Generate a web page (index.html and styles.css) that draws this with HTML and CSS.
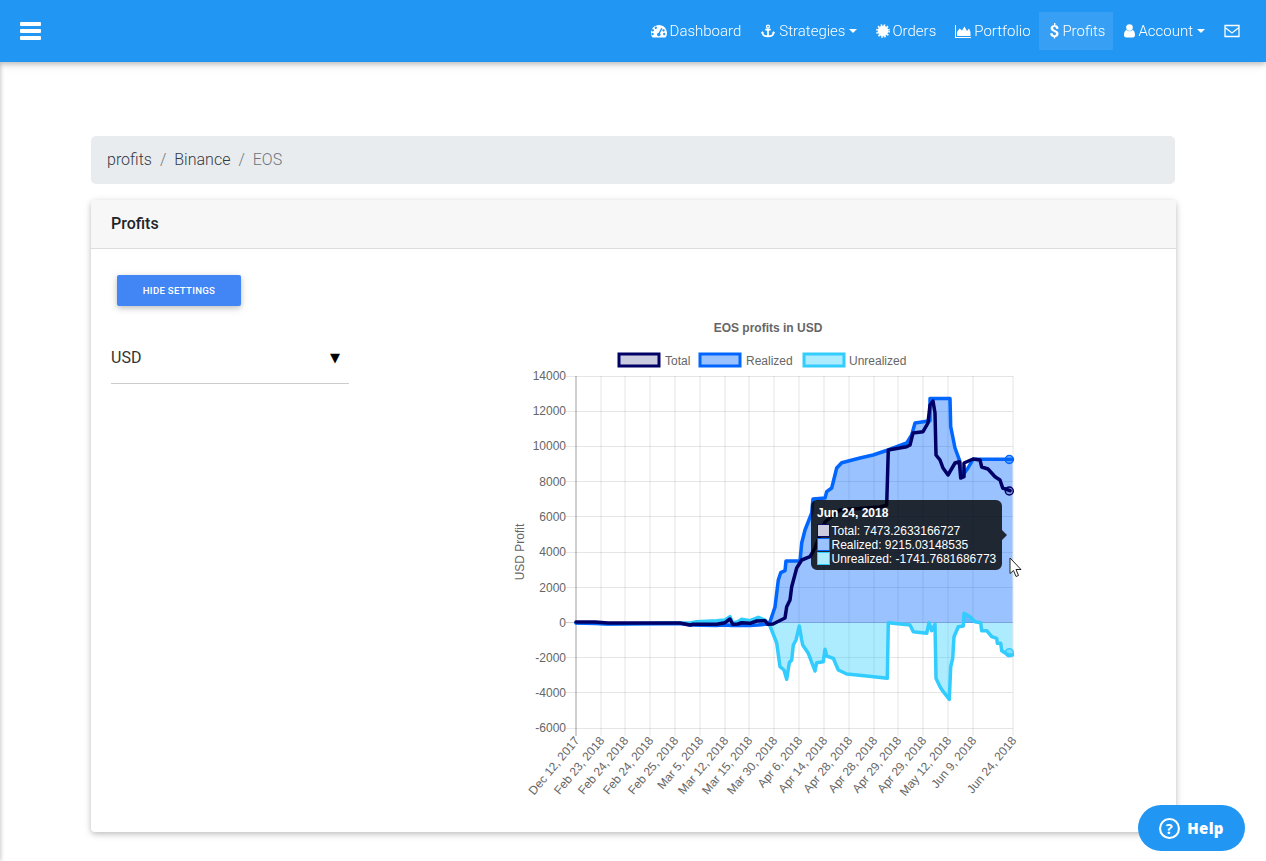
FILE: index.html
```html
<!DOCTYPE html>
<html lang="en">
<head>
<meta charset="utf-8">
<title>Profits</title>
<link rel="stylesheet" href="styles.css">
</head>
<body>
<div class="edge-shadow"></div>
<header class="navbar">
  <button class="burger" aria-label="Menu"><span></span><span></span><span></span></button>
  <nav class="nav">
    <a class="link"><svg class="ic w16" viewBox="0 0 16 14"><path fill-rule="evenodd" d="M8 1C3.6 1 0 4.6 0 9c0 1.500.4 2.900 1.100 4.100.2.300.4.400.7.400h12.400c.3 0 .5-.1.700-.4C15.600 11.900 16 10.500 16 9c0-4.400-3.600-8-8-8zM3 6.200a1.200 1.200 0 1 0 0 .01zM2.800 10a1.200 1.200 0 1 0 0 .01zM6 3.700a1.200 1.200 0 1 0 0 .01zM11.400 4.400 9 9.300a1.700 1.700 0 1 1-1.300-.5l2.500-4.900zM13.700 6.400a1.200 1.200 0 1 0 0 .01zM14.400 10a1.200 1.200 0 1 0 0 .01z"/></svg>Dashboard</a>
    <a class="link"><svg class="ic w16" viewBox="0 0 16 16"><path fill="none" stroke="#fff" stroke-width="2" d="M8 5v9M4.800 6.500h6.400M1.500 9c0 3.500 3 5 6.500 5s6.500-1.500 6.500-5"/><circle cx="8" cy="3" r="1.700" fill="none" stroke="#fff" stroke-width="1.500"/><path d="M0 10.500 1.500 8 3.500 10.500zM16 10.500 14.500 8 12.500 10.500z"/></svg>Strategies<i class="caret"></i></a>
    <a class="link"><svg class="ic w14" viewBox="0 0 14 14"><circle cx="7" cy="7" r="5.400"/><circle cx="7" cy="7" r="6.100" fill="none" stroke="#fff" stroke-width="1.600" stroke-dasharray="1.600 1.600"/></svg>Orders</a>
    <a class="link"><svg class="ic w16" viewBox="0 0 16 14"><path d="M0 1h1v12h15v1H0z"/><path d="M2 12V8l2.500-3.500L7 6.500 9.500 2.500 12 7l2-2.500L15.500 8v4z"/></svg>Portfolio</a>
    <a class="link active"><span class="dollar">$</span>Profits</a>
    <a class="link"><svg class="ic w11" viewBox="0 0 11 14"><circle cx="5.500" cy="3.600" r="3.300"/><path d="M0 11c0-3 1-4.800 2.700-5 .7.800 1.700 1.200 2.800 1.200S7.600 6.800 8.300 6c1.700.2 2.700 2 2.700 5 0 1.700-1 2.500-2.300 2.500H2.300C1 13.500 0 12.700 0 11z"/></svg>Account<i class="caret"></i></a>
    <a class="link"><svg class="ic w16" viewBox="0 0 16 14"><path fill="none" stroke="#fff" stroke-width="1.300" d="M1 1.500h14v11H1zM1 3.500l7 5.500 7-5.500"/></svg></a>
  </nav>
</header>

<main class="page">
  <ol class="crumbs">
    <li>profits</li>
    <li class="sep">/</li>
    <li class="crumb-mid">Binance</li>
    <li class="sep">/</li>
    <li class="crumb-last">EOS</li>
  </ol>

  <section class="card">
    <h2 class="card-head">Profits</h2>
    <div class="card-body">
      <div class="settings">
        <button class="btn">Hide settings</button>
        <div class="select"><span>USD</span><span class="arrow">▼</span></div>
      </div>
      <svg class="chart" viewBox="505 315 525 490" width="525" height="490">
        <text class="title" x="768" y="332" text-anchor="middle">EOS profits in USD</text>

        <rect x="619" y="354" width="40" height="12" class="sw-total"/>
        <text class="tick" x="665" y="365">Total</text>
        <rect x="700" y="354" width="40" height="12" class="sw-real"/>
        <text class="tick" x="746" y="365">Realized</text>
        <rect x="804" y="354" width="40" height="12" class="sw-unreal"/>
        <text class="tick" x="849" y="365">Unrealized</text>

        <path class="grid" d="M566 376.500H1013M566 411.500H1013M566 446.500H1013M566 481.500H1013M566 516.500H1013M566 552.500H1013M566 587.500H1013M566 657.500H1013M566 692.500H1013M566 728.500H1013M601 376V736M625 376V736M650 376V736M675 376V736M700 376V736M725 376V736M749 376V736M774 376V736M799 376V736M824 376V736M849 376V736M874 376V736M898 376V736M923 376V736M948 376V736M973 376V736M1013 376V736"/>
        <path class="zero" d="M566 622.500H1013"/>
        <path class="axis" d="M576 376V736"/>

        <g class="tick" text-anchor="end">
          <text x="566" y="380">14000</text>
          <text x="566" y="415">12000</text>
          <text x="566" y="450">10000</text>
          <text x="566" y="486">8000</text>
          <text x="566" y="521">6000</text>
          <text x="566" y="556">4000</text>
          <text x="566" y="592">2000</text>
          <text x="566" y="627">0</text>
          <text x="566" y="662">-2000</text>
          <text x="566" y="697">-4000</text>
          <text x="566" y="732">-6000</text>
        </g>
        <text class="tick" text-anchor="middle" transform="translate(524 552) rotate(-90)">USD Profit</text>

        <g class="tick" text-anchor="end">
          <text transform="translate(580 741) rotate(-50)">Dec 12, 2017</text>
          <text transform="translate(605 741) rotate(-50)">Feb 23, 2018</text>
          <text transform="translate(629 741) rotate(-50)">Feb 24, 2018</text>
          <text transform="translate(654 741) rotate(-50)">Feb 24, 2018</text>
          <text transform="translate(679 741) rotate(-50)">Feb 25, 2018</text>
          <text transform="translate(704 741) rotate(-50)">Mar 5, 2018</text>
          <text transform="translate(729 741) rotate(-50)">Mar 12, 2018</text>
          <text transform="translate(753 741) rotate(-50)">Mar 15, 2018</text>
          <text transform="translate(778 741) rotate(-50)">Mar 30, 2018</text>
          <text transform="translate(803 741) rotate(-50)">Apr 6, 2018</text>
          <text transform="translate(828 741) rotate(-50)">Apr 14, 2018</text>
          <text transform="translate(853 741) rotate(-50)">Apr 28, 2018</text>
          <text transform="translate(878 741) rotate(-50)">Apr 28, 2018</text>
          <text transform="translate(902 741) rotate(-50)">Apr 29, 2018</text>
          <text transform="translate(927 741) rotate(-50)">Apr 29, 2018</text>
          <text transform="translate(952 741) rotate(-50)">May 12, 2018</text>
          <text transform="translate(977 741) rotate(-50)">Jun 9, 2018</text>
          <text transform="translate(1017 741) rotate(-50)">Jun 24, 2018</text>
        </g>

        <path class="fill-unreal" d="M576 623L595 623L608 624L680 623L690 623L696.700 621.700L716.700 620.700L725 620L730 616.700L732.700 623L738 621.700L741.700 619.300L750 620.700L758.300 617.300L765 620L770 626L776.700 643L780 666.700L784 670L786.700 679.300L789.300 662.700L791.700 660L793.300 645L796 640L799.300 626L801.700 640L802.700 645L808.300 653.300L815 671L816.700 662.700L823.300 661.700L825 649.300L826.700 656L833.300 658.300L838.300 670L846.700 674L866.700 676L887.300 678.300L888.300 622.700L910 625L913.300 631.700L926.700 633.300L929 622.700L931.700 630.700L935 624.300L936 678.300L940 686.700L943.300 691.700L949.300 699.300L950.700 666.700L952.700 658.300L954 636.700L958.300 626.700L963.300 626L964 613.300L970 616.700L975 621.700L980.700 622.700L981.700 630.700L986.700 630.700L991.700 636.700L996.700 638.300L997.300 643.300L1000.700 643.300L1001.700 650.700L1008.300 655L1012.500 655V623Z"/>
        <path class="fill-real" d="M576 623L595 623.500L608 624L680 623.500L690 625L716 625.500L725 625L732 625.500L750 625.500L758 625L768 624L770 621.700L775 607L778.300 580L780.700 572.700L785 570.700L786 561L800 561L801.700 543L805 530L811.700 513L813 499L825 498L826.700 491.700L831.700 488L836.700 468L841.700 462.700L860 458L873 455L888 450L906.700 443L911.700 435L915 423L930 420.700L930 398.500L950 398.500L950.700 426.700L955 448L960 461.700L961.700 476.700L968 468L973 459.300L1012.500 459.300V623Z"/>

        <path class="line-unreal" d="M576 623L595 623L608 624L680 623L690 623L696.700 621.700L716.700 620.700L725 620L730 616.700L732.700 623L738 621.700L741.700 619.300L750 620.700L758.300 617.300L765 620L770 626L776.700 643L780 666.700L784 670L786.700 679.300L789.300 662.700L791.700 660L793.300 645L796 640L799.300 626L801.700 640L802.700 645L808.300 653.300L815 671L816.700 662.700L823.300 661.700L825 649.300L826.700 656L833.300 658.300L838.300 670L846.700 674L866.700 676L887.300 678.300L888.300 622.700L910 625L913.300 631.700L926.700 633.300L929 622.700L931.700 630.700L935 624.300L936 678.300L940 686.700L943.300 691.700L949.300 699.300L950.700 666.700L952.700 658.300L954 636.700L958.300 626.700L963.300 626L964 613.300L970 616.700L975 621.700L980.700 622.700L981.700 630.700L986.700 630.700L991.700 636.700L996.700 638.300L997.300 643.300L1000.700 643.300L1001.700 650.700L1008.300 655L1012.500 655"/>
        <path class="line-real" d="M576 623L595 623.500L608 624L680 623.500L690 625L716 625.500L725 625L732 625.500L750 625.500L758 625L768 624L770 621.700L775 607L778.300 580L780.700 572.700L785 570.700L786 561L800 561L801.700 543L805 530L811.700 513L813 499L825 498L826.700 491.700L831.700 488L836.700 468L841.700 462.700L860 458L873 455L888 450L906.700 443L911.700 435L915 423L930 420.700L930 398.500L950 398.500L950.700 426.700L955 448L960 461.700L961.700 476.700L968 468L973 459.300L1012.500 459.300"/>
        <path class="line-total" d="M576 622L595 622L608 623L680 623L690 625L693 624.300L716.700 624.300L725 622.700L730 619L732.700 624.300L738 624L741.700 622.700L750 623.300L756.700 621L765 620.700L768 624.300L773 624L785 618L786.700 606.700L790 600L791.700 586.700L796.700 568L801.700 560L810 556.700L815 548L825 522L840 510L880 507L886.700 505L888.300 450L906.700 446.700L910 445L913 433L923 431.700L928 423L930 405L933 401L935 413L936 455L940 460L943 468L948 475L955 463L959.300 461.700L960.700 478L964 476.700L964 463L973 459L980 460L981.700 467L988 469L995 476.700L1000 480L1002.700 488L1010 490.700"/>

        <circle class="pt-real" cx="1009.300" cy="459.500" r="4"/>
        <circle class="pt-total" cx="1009.300" cy="491" r="4"/>
        <circle class="pt-unreal" cx="1009.300" cy="652.700" r="4"/>

        <path class="tip" d="M817 500H996a6 6 0 0 1 6 6V530L1007 535L1002 540V564a6 6 0 0 1-6 6H817a6 6 0 0 1-6-6V506a6 6 0 0 1 6-6Z"/>
        <text class="tip-title" x="817" y="516.500">Jun 24, 2018</text>
        <rect class="key" x="817.500" y="524.500" width="12" height="12"/>
        <rect class="key-total" x="817.500" y="524.500" width="12" height="12"/>
        <text class="tip-text" x="831.500" y="534.500">Total: 7473.2633166727</text>
        <rect class="key" x="817.500" y="538.500" width="12" height="12"/>
        <rect class="key-real" x="817.500" y="538.500" width="12" height="12"/>
        <text class="tip-text" x="831.500" y="548.500">Realized: 9215.03148535</text>
        <rect class="key" x="817.500" y="552.500" width="12" height="12"/>
        <rect class="key-unreal" x="817.500" y="552.500" width="12" height="12"/>
        <text class="tip-text" x="831.500" y="562.500">Unrealized: -1741.7681686773</text>

        <path class="cursor" d="M1010 558V573.500L1013.500 570.500L1016 576.500L1018.500 575.500L1016 569.500L1021 569.500Z"/>
      </svg>
    </div>
  </section>
</main>

<button class="help"><svg class="help-ic" viewBox="0 0 20 20"><circle cx="10" cy="10" r="9" fill="none" stroke="#fff" stroke-width="2"/><text x="10" y="15" text-anchor="middle" class="help-q">?</text></svg>Help</button>
</body>
</html>
```

FILE: styles.css
```css
* { box-sizing: border-box; }
html, body { margin: 0; padding: 0; }
body {
  height: 861px;
  overflow: hidden;
  background: #fff;
  font-family: Roboto, "Liberation Sans", sans-serif;
  font-weight: 300;
  font-size: 16px;
  color: #212529;
}

.edge-shadow {
  position: fixed;
  left: -6px;
  top: 0;
  width: 6px;
  height: 100%;
  box-shadow: 0 0 5px rgba(0, 0, 0, .3);
}

.navbar {
  position: relative;
  height: 62px;
  background: #2196f3;
  box-shadow: 0 2px 5px rgba(0, 0, 0, .2), 0 2px 10px rgba(0, 0, 0, .12);
  display: flex;
  align-items: center;
  justify-content: space-between;
  padding: 0 15px 0 20px;
}
.burger {
  display: flex;
  flex-direction: column;
  gap: 3px;
  width: 21px;
  padding: 0;
  margin: 0;
  border: 0;
  background: none;
}
.burger span {
  display: block;
  height: 4px;
  width: 21px;
  background: #fff;
  border-radius: 1px;
}
.nav { display: flex; align-items: center; }
.link {
  display: flex;
  align-items: center;
  height: 38px;
  padding: 0 8px;
  margin-left: 3px;
  color: #fff;
  font-size: 15px;
  font-weight: 300;
}
.link.active {
  margin-left: 0;
  padding-left: 11px;
  background: rgba(255, 255, 255, .1);
}
.ic { display: block; fill: #fff; margin-right: 3px; }
.w16 { width: 16px; height: 14px; }
.w14 { width: 14px; height: 14px; margin-right: 2px; }
.w11 { width: 11px; height: 14px; }
.dollar { font-weight: 700; font-size: 17px; margin-right: 3px; }
.caret {
  display: block;
  margin-left: 4px;
  border-top: 4.500px solid #fff;
  border-left: 4.500px solid transparent;
  border-right: 4.500px solid transparent;
}

.page { width: 1085px; margin: 74px 0 0 91px; }

.crumbs {
  list-style: none;
  margin: 0;
  width: 1084px;
  height: 48px;
  padding: 0 16px 1px;
  display: flex;
  align-items: center;
  gap: 8px;
  background: #e9ecef;
  border-radius: 5px;
  color: #343a40;
}
.sep { color: #6c757d; }
.crumb-last { color: #6c757d; }

.card {
  margin-top: 16px;
  height: 632px;
  background: #fff;
  border-radius: 4px;
  box-shadow: 0 2px 5px rgba(0, 0, 0, .16), 0 2px 10px rgba(0, 0, 0, .12);
}
.card-head {
  margin: 0;
  height: 49px;
  padding: 0 20px 1px;
  display: flex;
  align-items: center;
  background: #f7f7f7;
  border-bottom: 1px solid #dcdcdc;
  border-radius: 4px 4px 0 0;
  font-size: 16px;
  font-weight: 500;
}
.card-body { display: flex; padding: 26px 0 0 20px; }
.settings { width: 238px; flex: none; }
.btn {
  display: block;
  width: 124px;
  height: 31px;
  margin: 0 0 0 6px;
  padding: 0;
  border: 0;
  border-radius: 2px;
  background: #4285f4;
  color: #fff;
  font-family: Roboto, sans-serif;
  font-size: 9.600px;
  font-weight: 500;
  letter-spacing: .3px;
  text-transform: uppercase;
  box-shadow: 0 2px 5px rgba(0, 0, 0, .16), 0 2px 10px rgba(0, 0, 0, .12);
}
.select {
  display: flex;
  align-items: center;
  justify-content: space-between;
  height: 48px;
  margin-top: 30px;
  padding: 0 9px 5px 0;
  border-bottom: 1px solid #ccc;
  color: #333;
  font-weight: 400;
  font-size: 16px;
}
.arrow { color: #000; font-size: 13px; font-family: "DejaVu Sans", sans-serif; }
.chart { display: block; flex: none; margin: 40px 0 0 156px; font-family: "Liberation Sans", Arial, sans-serif; }

.title { font-size: 12px; font-weight: 700; fill: #666; }
.tick { font-size: 12px; fill: #666; }

.grid { fill: none; stroke: rgba(0, 0, 0, .1); stroke-width: 1; }
.zero { fill: none; stroke: rgba(0, 0, 0, .2); stroke-width: 1; }
.axis { fill: none; stroke: rgba(0, 0, 0, .25); stroke-width: 1.500; }

.sw-total { fill: rgba(0, 0, 102, .2); stroke: #006; stroke-width: 3; }
.sw-real { fill: rgba(0, 102, 255, .4); stroke: #06f; stroke-width: 3; }
.sw-unreal { fill: rgba(51, 204, 255, .4); stroke: #3cf; stroke-width: 3; }

.fill-real { fill: rgba(0, 102, 255, .4); }
.fill-unreal { fill: rgba(51, 204, 255, .4); }
.line-real, .line-unreal, .line-total {
  fill: none;
  stroke-width: 3.500;
  stroke-linejoin: round;
  stroke-linecap: round;
}
.line-real { stroke: #06f; }
.line-unreal { stroke: #3cf; }
.line-total { stroke: #006; }

.pt-real { fill: rgba(0, 102, 255, .4); stroke: #06f; stroke-width: 1.500; }
.pt-total { fill: rgba(0, 0, 102, .2); stroke: #006; stroke-width: 1.500; }
.pt-unreal { fill: rgba(51, 204, 255, .4); stroke: #3cf; stroke-width: 1.500; }

.tip { fill: rgba(0, 0, 0, .8); }
.tip-title { font-size: 12px; font-weight: 700; fill: #fff; }
.tip-text { font-size: 12px; fill: #fff; }
.key { fill: #fff; }
.key-total { fill: rgba(0, 0, 102, .2); stroke: rgba(0, 0, 102, .9); stroke-width: 1; }
.key-real { fill: rgba(0, 102, 255, .4); stroke: #06f; stroke-width: 1; }
.key-unreal { fill: rgba(51, 204, 255, .4); stroke: #3cf; stroke-width: 1; }

.cursor { fill: #fff; stroke: #222; stroke-width: 1; }

.help {
  position: fixed;
  right: 21px;
  bottom: 10px;
  width: 107px;
  height: 46px;
  display: flex;
  align-items: center;
  justify-content: center;
  gap: 7px;
  padding: 0;
  border: 0;
  border-radius: 23px;
  background: #2196f3;
  color: #fff;
  font-family: "Open Sans", sans-serif;
  font-size: 15px;
  font-weight: 800;
  letter-spacing: .3px;
}
.help-ic { width: 21px; height: 21px; display: block; }
.help-q { font-size: 14px; font-weight: 700; fill: #fff; font-family: "Open Sans", sans-serif; }
```
